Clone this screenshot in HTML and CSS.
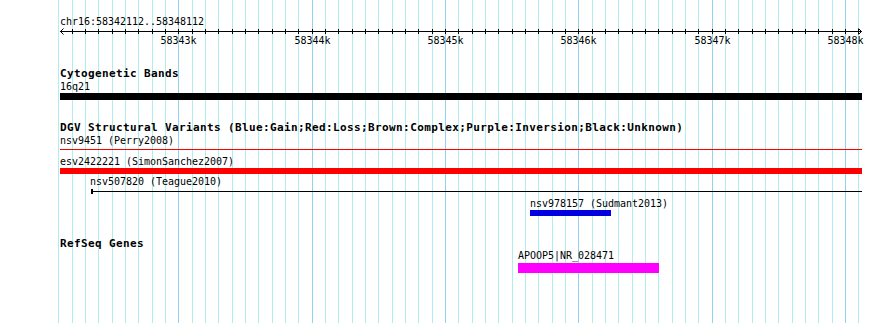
FILE: index.html
```html
<!DOCTYPE html>
<html>
<head>
<meta charset="utf-8">
<title>GBrowse detail</title>
<link rel="stylesheet" href="styles.css">
</head>
<body>
<div class="browser">
  <svg class="grid" width="890" height="323" viewBox="0 0 890 323" shape-rendering="crispEdges">
    <g class="minor">
      <rect x="58" width="1" height="323"/><rect x="72" width="1" height="323"/><rect x="85" width="1" height="323"/><rect x="98" width="1" height="323"/><rect x="112" width="1" height="323"/><rect x="125" width="1" height="323"/><rect x="138" width="1" height="323"/><rect x="152" width="1" height="323"/><rect x="165" width="1" height="323"/>
      <rect x="192" width="1" height="323"/><rect x="205" width="1" height="323"/><rect x="218" width="1" height="323"/><rect x="232" width="1" height="323"/><rect x="245" width="1" height="323"/><rect x="258" width="1" height="323"/><rect x="272" width="1" height="323"/><rect x="285" width="1" height="323"/><rect x="298" width="1" height="323"/>
      <rect x="325" width="1" height="323"/><rect x="338" width="1" height="323"/><rect x="352" width="1" height="323"/><rect x="365" width="1" height="323"/><rect x="378" width="1" height="323"/><rect x="392" width="1" height="323"/><rect x="405" width="1" height="323"/><rect x="418" width="1" height="323"/><rect x="432" width="1" height="323"/>
      <rect x="458" width="1" height="323"/><rect x="472" width="1" height="323"/><rect x="485" width="1" height="323"/><rect x="498" width="1" height="323"/><rect x="512" width="1" height="323"/><rect x="525" width="1" height="323"/><rect x="538" width="1" height="323"/><rect x="552" width="1" height="323"/><rect x="565" width="1" height="323"/>
      <rect x="592" width="1" height="323"/><rect x="605" width="1" height="323"/><rect x="618" width="1" height="323"/><rect x="632" width="1" height="323"/><rect x="645" width="1" height="323"/><rect x="658" width="1" height="323"/><rect x="672" width="1" height="323"/><rect x="685" width="1" height="323"/><rect x="698" width="1" height="323"/>
      <rect x="725" width="1" height="323"/><rect x="738" width="1" height="323"/><rect x="752" width="1" height="323"/><rect x="765" width="1" height="323"/><rect x="778" width="1" height="323"/><rect x="792" width="1" height="323"/><rect x="805" width="1" height="323"/><rect x="818" width="1" height="323"/><rect x="832" width="1" height="323"/>
      <rect x="858" width="1" height="323"/>
    </g>
    <g class="major">
      <rect x="178" width="1" height="323"/><rect x="312" width="1" height="323"/><rect x="445" width="1" height="323"/><rect x="578" width="1" height="323"/><rect x="712" width="1" height="323"/><rect x="845" width="1" height="323"/>
    </g>
  </svg>

  <div class="panel">
    <div class="seg-label">chr16:58342112..58348112</div>
    <svg class="axis" width="810" height="20" viewBox="0 0 810 20">
      <path class="axis-line" d="M0 3.5H801.5M3.5 0.5L0.5 3.5L3.5 6.5M798.5 0.5L801.5 3.5L798.5 6.5M12.5 1v5M25.5 1v5M38.5 1v5M52.5 1v5M65.5 1v5M78.5 1v5M92.5 1v5M105.5 1v5M118.5 1v5M132.5 1v5M145.5 1v5M158.5 1v5M172.5 1v5M185.5 1v5M198.5 1v5M212.5 1v5M225.5 1v5M238.5 1v5M252.5 1v5M265.5 1v5M278.5 1v5M292.5 1v5M305.5 1v5M318.5 1v5M332.5 1v5M345.5 1v5M358.5 1v5M372.5 1v5M385.5 1v5M398.5 1v5M412.5 1v5M425.5 1v5M438.5 1v5M452.5 1v5M465.5 1v5M478.5 1v5M492.5 1v5M505.5 1v5M518.5 1v5M532.5 1v5M545.5 1v5M558.5 1v5M572.5 1v5M585.5 1v5M598.5 1v5M612.5 1v5M625.5 1v5M638.5 1v5M652.5 1v5M665.5 1v5M678.5 1v5M692.5 1v5M705.5 1v5M718.5 1v5M732.5 1v5M745.5 1v5M758.5 1v5M772.5 1v5M785.5 1v5M798.5 1v5"/>
      <text class="tick-label" x="118.5" y="16">58343k</text>
      <text class="tick-label" x="252.5" y="16">58344k</text>
      <text class="tick-label" x="385.5" y="16">58345k</text>
      <text class="tick-label" x="518.5" y="16">58346k</text>
      <text class="tick-label" x="652.5" y="16">58347k</text>
      <text class="tick-label" x="785.5" y="16">58348k</text>
    </svg>

    <div class="track-title title-cyto">Cytogenetic Bands</div>
    <div class="feat-label">16q21</div>
    <div class="bar band"></div>

    <div class="track-title title-dgv">DGV Structural Variants (Blue:Gain;Red:Loss;Brown:Complex;Purple:Inversion;Black:Unknown)</div>
    <div class="feat-label">nsv9451 (Perry2008)</div>
    <div class="bar loss-thin"></div>
    <div class="feat-label esv-label">esv2422221 (SimonSanchez2007)</div>
    <div class="bar loss"></div>
    <div class="feat-label teague-label" style="margin-left:30px">nsv507820 (Teague2010)</div>
    <div class="span-line" style="margin-left:31px"></div>
    <div class="feat-label sudmant-label" style="margin-left:470px">nsv978157 (Sudmant2013)</div>
    <div class="bar gain" style="margin-left:470px;width:81px"></div>

    <div class="track-title title-refseq">RefSeq Genes</div>
    <div class="feat-label gene-label" style="margin-left:458px">APOOP5|NR_028471</div>
    <div class="bar gene" style="margin-left:458px;width:141px"></div>
  </div>
</div>
</body>
</html>
```

FILE: styles.css
```css
html, body {
  margin: 0;
  padding: 0;
  background: #ffffff;
}

.browser {
  display: grid;
  width: 890px;
  height: 323px;
  overflow: hidden;
  background: #ffffff;
}

.browser > * {
  grid-area: 1 / 1;
}

.grid {
  display: block;
}

.grid .minor rect {
  fill: #afeeee;
}

.grid .major rect {
  fill: #92d2f2;
}

.panel {
  display: flex;
  flex-direction: column;
  align-items: flex-start;
  padding-left: 60px;
  width: 802px;
  font-family: "DejaVu Sans Mono", "Liberation Mono", monospace;
  color: #000000;
}

.seg-label,
.feat-label {
  font-size: 10px;
  letter-spacing: -0.02px;
  line-height: 13px;
  height: 13px;
  white-space: nowrap;
}

.seg-label {
  margin-top: 15px;
}

.axis {
  display: block;
  overflow: visible;
}

.axis-line {
  fill: none;
  stroke: #000000;
  stroke-width: 1;
}

.tick-label {
  font-family: "DejaVu Sans Mono", "Liberation Mono", monospace;
  font-size: 10px;
  letter-spacing: -0.02px;
  fill: #000000;
  text-anchor: middle;
}

.track-title {
  font-size: 11px;
  font-weight: bold;
  letter-spacing: 0.38px;
  line-height: 13px;
  height: 13px;
  white-space: nowrap;
}

.title-cyto {
  margin-top: 19px;
}

.title-dgv {
  margin-top: 21px;
}

.title-refseq {
  margin-top: 21px;
}

.bar {
  width: 802px;
}

.band {
  height: 7px;
  background: #000000;
}

.loss-thin {
  margin-top: 2px;
  height: 1px;
  background: #ff0000;
}

.esv-label {
  margin-top: 5px;
}

.loss {
  height: 6px;
  background: #ff0000;
}

.teague-label {
  margin-top: 1px;
}

.span-line {
  width: 771px;
  height: 7px;
  background: linear-gradient(#000000, #000000) 0 3px / 100% 1px no-repeat;
}

.span-line::before {
  content: "";
  display: block;
  width: 2px;
  height: 5px;
  margin-top: 1px;
  background: #000000;
}

.sudmant-label {
  margin-top: 2px;
}

.gain {
  height: 6px;
  background: #0000e0;
}

.gene-label {
  margin-top: -1px;
  margin-bottom: 1px;
}

.gene {
  height: 10px;
  background: #ff00ff;
}
```
